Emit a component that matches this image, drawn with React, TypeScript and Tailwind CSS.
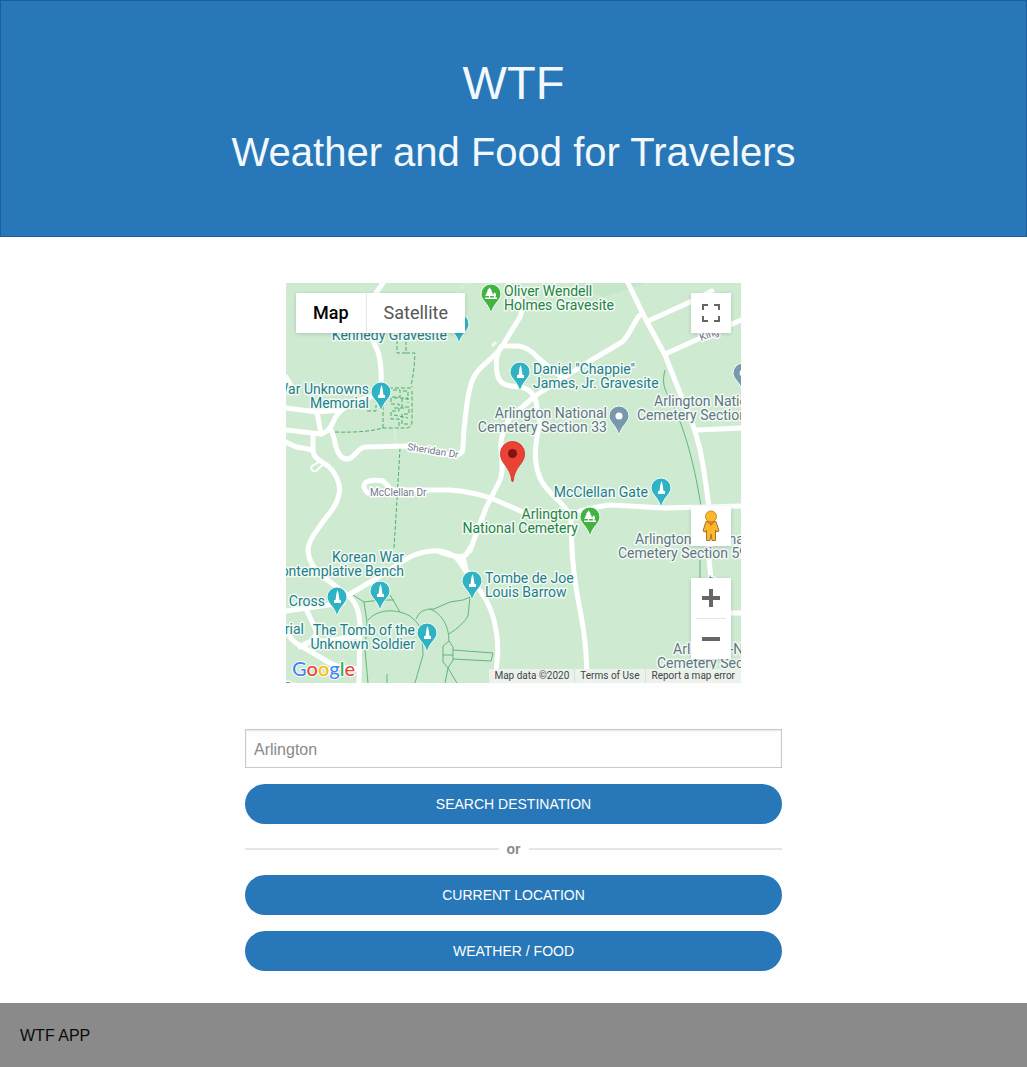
const TEAL = "#1b7f8b";
const GREEN = "#1f8445";
const SLATE = "#5f7684";

type PinKind = "monument" | "tree" | "place";

const roads = [
  "M383 283C380 288 377 290 375 295Q369 315 371 333C372 342 376 346 378 352Q382 366 381 383C380 393 372 397 364 399C350 403 340 409 335 418C332 425 329 432 321 434L286 430",
  "M286 377L291 386",
  "M286 408L317 412L341 410M317 412L321 434",
  "M330 428Q333 434 334 438C336 450 340 459 347 459C355 459 357 447 366 447L407 446C425 449 440 455 456 455Q463 454 463 448L464 430C466 415 466 398 472 381C478 366 490 362 501 348L520 317C524 308 520 302 516 297L508 283",
  "M286 442Q296 448 303 448L313 450V435",
  "M313 450C313 459 322 461 328 466C337 474 341 486 339 494C337 507 327 515 320 526Q308 541 308 550C309 565 318 572 325 578L346 594C356 601 359 610 360 625L359 683",
  "M350 594L377 578L397 565C412 554 428 550 440 551C456 554 459 560 465 570C479 590 491 600 496 630C500 650 496 665 495 683",
  "M440 552Q458 559 466 555L470 548M463 557L467 574",
  "M470 551C474 539 479 526 486 508L500 480C505 469 500 455 501 441Q506 416 520 409L535 396L563 378L590 361L622 342C630 335 634 321 640 315",
  "M502 346C496 353 495 365 498 377C502 387 512 386 521 387Q537 391 537 410L540 423C534 447 533 465 542 482C550 496 570 507 571 520L572 548Q573 575 581 615Q587 645 587 683",
  "M502 346H518Q529 347 538 358L560 376",
  "M368 493Q361 487 366 482Q373 479 383 481Q387 484 391 490L450 490Q475 492 493 499L523 512M580 511Q593 507 610 505L665 508L741 506",
  "M628 283L645 318L665 355L682 398C700 436 703 462 709 507V560L715 613H741",
  "M648 321L688 303L712 291M665 354L741 320M697 430L741 428",
  "M286 611L343 603M307 611L316 630Q318 637 308 643L300 647M286 631Q291 641 301 646L330 663Q340 669 359 669M302 646Q310 639 325 641L358 636",
];

const footpaths = [
  "M353 595L364 602L380 600H394M364 602L367 622L365 650L368 683",
  "M390 595L400 612M368 620C379 608 397 609 410 616Q418 622 422 630",
  "M416 619Q420 608 434 609L450 602L463 600L470 597L468 616Q463 625 449 634",
  "M430 609C441 613 449 625 449 641M422 630L423 655L415 683M387 683V674",
  "M449 641L453 647V660L448 668L443 662V646ZM443 655H453M453 650L493 653L491 661L453 659M448 668L457 683M448 668L445 683",
  "M665 370C662 381 664 389 668 395M668 395C682 421 693 456 701 506M700 560V578",
];

const dashedPaths = [
  "M400 448L397 500L394 548M385 550V556",
  "M335 432Q365 433 383 428H407Q412 427 412 421V391M383 428V390M383 388H412V386",
  "M397 340V353H406V341M406 353H415Q414 374 411 385M367 411H376V405",
  "M393 390H400V397H391V404H399V411H391V419H399V426M403 391H408V399H402V407H409V414H402V424H408M394 398H408V403M394 408H406M394 415L408 418",
];

const labels: { lines: [string, number, number][]; fill: string; anchor: "start" | "end" }[] = [
  { fill: GREEN, anchor: "start", lines: [["Oliver Wendell", 504, 296], ["Holmes Gravesite", 504, 310]] },
  { fill: TEAL, anchor: "end", lines: [["Kennedy Gravesite", 447, 340]] },
  { fill: TEAL, anchor: "start", lines: [['Daniel "Chappie"', 533, 374], ["James, Jr. Gravesite", 533, 388]] },
  { fill: TEAL, anchor: "end", lines: [["War Unknowns", 369, 394], ["Memorial", 369, 408]] },
  { fill: SLATE, anchor: "end", lines: [["Arlington National", 607, 418], ["Cemetery Section 33", 607, 432]] },
  { fill: SLATE, anchor: "start", lines: [["Arlington National", 654, 406], ["Cemetery Section 34", 637, 420]] },
  { fill: TEAL, anchor: "end", lines: [["McClellan Gate", 648, 497]] },
  { fill: GREEN, anchor: "end", lines: [["Arlington", 578, 519], ["National Cemetery", 578, 533]] },
  { fill: SLATE, anchor: "start", lines: [["Arlington National", 635, 544], ["Cemetery Section 59", 618, 558]] },
  { fill: TEAL, anchor: "end", lines: [["Korean War", 404, 562], ["Contemplative Bench", 404, 576]] },
  { fill: TEAL, anchor: "end", lines: [["Cross", 325, 606]] },
  { fill: TEAL, anchor: "end", lines: [["Memorial", 304, 634]] },
  { fill: TEAL, anchor: "end", lines: [["The Tomb of the", 415, 635], ["Unknown Soldier", 415, 649]] },
  { fill: TEAL, anchor: "start", lines: [["Tombe de Joe", 485, 583], ["Louis Barrow", 485, 597]] },
  { fill: SLATE, anchor: "start", lines: [["Arlington-National", 673, 654], ["Cemetery Section", 657, 668]] },
];

const pins: [number, number, PinKind][] = [
  [491, 294, "tree"],
  [459, 324, "monument"],
  [520, 372, "monument"],
  [381, 392, "monument"],
  [619, 416, "place"],
  [743, 373, "place"],
  [661, 488, "monument"],
  [590, 517, "tree"],
  [472, 581, "monument"],
  [380, 591, "monument"],
  [337, 597, "monument"],
  [427, 633, "monument"],
];

const pinColors: Record<PinKind, string> = { monument: "#2fb3c4", tree: "#43b243", place: "#7798ad" };

function Pin({ x, y, kind }: { x: number; y: number; kind: PinKind }) {
  return (
    <g transform={`translate(${x} ${y})`}>
      <path
        d="M0 -10A10 10 0 0 1 10 0C10 6 3 9 0.500 18H-0.500C-3 9 -10 6 -10 0A10 10 0 0 1 0 -10Z"
        fill={pinColors[kind]}
        stroke="#f4fbf4"
        strokeWidth="1"
      />
      {kind === "monument" && (
        <path d="M0.500 -7L1.500 -4L2.500 3H4V6H-3V3H-1.500L-0.500 -4Z" fill="#fff" />
      )}
      {kind === "tree" && (
        <path
          d="M-1.500 -6.500L1 -3H0.200L2 -0.500H1.200L3 2H-1V3.500H3V2.500Q1.500 0 3.500 -1.500Q6 0 4.500 2.500V3.500H6V5H-6V3.500H-2V2H-6L-4.200 -0.500H-5L-3.200 -3H-4Z"
          fill="#fff"
        />
      )}
      {kind === "place" && <circle r="3.500" fill="#fff" />}
    </g>
  );
}

function MapDrawing() {
  return (
    <svg
      viewBox="286 283 455 400"
      preserveAspectRatio="xMidYMid slice"
      className="block h-full w-full"
      role="img"
      aria-label="Map of Arlington National Cemetery"
    >
      <rect x="286" y="283" width="455" height="400" fill="#ceead1" />
      <path d="M570 283H646L634 287L603 297Z" fill="#c4e7c9" />
      <path d="M450 299L468 283" stroke="#e6f5e7" strokeWidth="1" strokeDasharray="5 2" fill="none" />
      <path d="M492 346L496 342" stroke="#f3faf3" strokeWidth="3" fill="none" />
      <path d="M395 428V446" stroke="#e6f5e7" strokeWidth="1" strokeDasharray="5 2" fill="none" />
      <path d="M319 462L312 466Q310 469 313 471Q316 472 318 469L325 463" stroke="#fff" strokeWidth="2" fill="none" />
      {footpaths.map((d) => (
        <path key={d} d={d} fill="none" stroke="#5fb77b" strokeWidth="1" />
      ))}
      {dashedPaths.map((d) => (
        <path key={d} d={d} fill="none" stroke="#4fae6d" strokeWidth="1" strokeDasharray="4 2" />
      ))}
      {roads.map((d) => (
        <path key={d} d={d} fill="none" stroke="#fff" strokeWidth="5" strokeLinejoin="round" strokeLinecap="round" />
      ))}

      <g
        fontFamily="Roboto, sans-serif"
        fontSize="10"
        fill="#72798a"
        stroke="#fff"
        strokeWidth="3"
        strokeLinejoin="round"
        paintOrder="stroke"
      >
        <text transform="translate(407 450) rotate(9)">Sheridan Dr</text>
        <text x="370" y="496">McClellan Dr</text>
        <text transform="translate(701 341) rotate(-20)">King</text>
        <text transform="translate(713 586) rotate(-80)">Dr</text>
        <text x="285" y="690">Po</text>
      </g>

      {pins.map(([x, y, kind]) => (
        <Pin key={`${x}-${y}`} x={x} y={y} kind={kind} />
      ))}

      <g
        fontFamily="Roboto, sans-serif"
        fontSize="14"
        stroke="#f3faf3"
        strokeWidth="3"
        strokeLinejoin="round"
        paintOrder="stroke"
      >
        {labels.map(({ lines, fill, anchor }) =>
          lines.map(([text, x, y]) => (
            <text key={`${text}-${x}-${y}`} x={x} y={y} fill={fill} textAnchor={anchor}>
              {text}
            </text>
          )),
        )}
      </g>

      <path
        d="M512.500 441.500A12 12 0 0 1 524.500 454C524.500 464 514.500 466 513 481.500H512C510.500 466 500.500 464 500.500 454A12 12 0 0 1 512.500 441.500Z"
        fill="#ea4335"
        stroke="#d8372a"
        strokeWidth="1"
      />
      <circle cx="512.500" cy="453.500" r="4.500" fill="#811411" />

      <text
        x="292"
        y="676"
        fontFamily="Lato, sans-serif"
        fontSize="20"
        fontWeight="500"
        strokeWidth="2"
        stroke="#fff"
        paintOrder="stroke"
      >
        <tspan fill="#4285f4">G</tspan>
        <tspan fill="#ea4335">o</tspan>
        <tspan fill="#fbbc05">o</tspan>
        <tspan fill="#4285f4">g</tspan>
        <tspan fill="#34a853">l</tspan>
        <tspan fill="#ea4335">e</tspan>
      </text>
    </svg>
  );
}

function Pegman() {
  return (
    <svg viewBox="0 0 18 32" className="h-8 w-[18px]" aria-hidden="true">
      <path
        d="M4 11.500H14L17 21L14.500 22L13.500 20V30.500H10L9 24L8 30.500H4.500V20L3.500 22L1 21Z"
        fill="#fbb829"
        stroke="#a17431"
        strokeWidth="1"
        strokeLinejoin="round"
      />
      <path d="M5 12H13L9 16Z" fill="#e8762c" />
      <circle cx="9" cy="6.500" r="5.500" fill="#fbb829" stroke="#c58b2b" strokeWidth="1" />
    </svg>
  );
}

function MapPanel() {
  return (
    <section
      aria-label="Map"
      className="relative h-[400px] w-full max-w-[455px] overflow-hidden font-[Roboto,sans-serif]"
    >
      <MapDrawing />
      <div className="absolute top-2.5 left-2.5 flex h-10 bg-white text-lg shadow-[0_1px_4px_rgba(0,0,0,0.15)]">
        <button type="button" className="border-r border-gray-200 px-[17px] font-medium text-black">
          Map
        </button>
        <button type="button" className="px-[17px] text-[#565656]">
          Satellite
        </button>
      </div>
      <button
        type="button"
        aria-label="Toggle fullscreen view"
        className="absolute top-2.5 right-2.5 flex size-10 items-center justify-center bg-white shadow-[0_1px_4px_rgba(0,0,0,0.15)]"
      >
        <svg viewBox="0 0 18 18" className="size-[18px]" aria-hidden="true">
          <path d="M1 6V1H6M12 1H17V6M17 12V17H12M6 17H1V12" fill="none" stroke="#666" strokeWidth="2" />
        </svg>
      </button>
      <div className="absolute right-2.5 bottom-6 flex w-10 flex-col gap-8">
        <button
          type="button"
          aria-label="Street View"
          className="flex h-10 items-center justify-center bg-white shadow-[0_1px_4px_rgba(0,0,0,0.15)]"
        >
          <Pegman />
        </button>
        <div className="flex flex-col items-center bg-white shadow-[0_1px_4px_rgba(0,0,0,0.15)]">
          <button type="button" aria-label="Zoom in" className="flex size-10 items-center justify-center">
            <svg viewBox="0 0 18 18" className="size-[18px]" aria-hidden="true">
              <path d="M9 0V18M0 9H18" stroke="#666" strokeWidth="4" />
            </svg>
          </button>
          <div className="h-px w-[30px] bg-[#e6e6e6]" />
          <button type="button" aria-label="Zoom out" className="flex size-10 items-center justify-center">
            <svg viewBox="0 0 18 18" className="size-[18px]" aria-hidden="true">
              <path d="M0 9H18" stroke="#666" strokeWidth="4" />
            </svg>
          </button>
        </div>
      </div>
      <div className="absolute right-0 bottom-0 flex h-3.5 divide-x divide-[#d5e2d6] bg-[#eef3ee]/90 text-[10px] leading-[14px] text-[#444]">
        <span className="px-[5px]">Map data ©2020</span>
        <a href="#terms" className="px-[5px]">
          Terms of Use
        </a>
        <a href="#report" className="px-[6px]">
          Report a map error
        </a>
      </div>
    </section>
  );
}

function PillButton({ children }: { children: string }) {
  return (
    <button
      type="button"
      className="h-10 w-full rounded-full bg-[#2878b9] text-sm text-[#fefefe] uppercase"
    >
      {children}
    </button>
  );
}

export default function App() {
  return (
    <div className="flex min-h-screen flex-col bg-[#fefefe] font-['Liberation_Sans',Arial,sans-serif]">
      <header className="border border-[#1c5f97] bg-[#2878b9] px-4 pt-12 pb-14 text-center text-[#f3f8fc]">
        <h1 className="mb-2 text-[47px] leading-[68px]">WTF</h1>
        <p className="text-[40px] leading-[55px]">Weather and Food for Travelers</p>
      </header>

      <main className="flex flex-1 flex-col items-center px-4 pt-[46px] pb-8">
        <MapPanel />
        <form className="mt-[46px] flex w-full max-w-[537px] flex-col" onSubmit={(e) => e.preventDefault()}>
          <input
            type="text"
            aria-label="Destination"
            placeholder="Arlington"
            className="mb-4 h-[39px] w-full border border-[#cacaca] bg-[#fefefe] px-2 pt-0.5 text-base text-[#0a0a0a] shadow-[inset_0_1px_2px_rgba(10,10,10,0.1)] placeholder:text-[#8a8a8a]"
          />
          <PillButton>Search Destination</PillButton>
          <div className="mt-3.5 mb-[15px] flex items-center gap-2 text-sm leading-[22px] font-bold text-[#8a8a8a]">
            <div className="h-0.5 flex-1 bg-[#e6e6e6]" />
            <span>or</span>
            <div className="h-0.5 flex-1 bg-[#e6e6e6]" />
          </div>
          <div className="flex flex-col gap-4">
            <PillButton>Current Location</PillButton>
            <PillButton>Weather / Food</PillButton>
          </div>
        </form>
      </main>

      <footer className="bg-[#8a8a8a] px-5 pt-[21px] pb-[19px] text-base text-[#0a0a0a]">WTF APP</footer>
    </div>
  );
}
